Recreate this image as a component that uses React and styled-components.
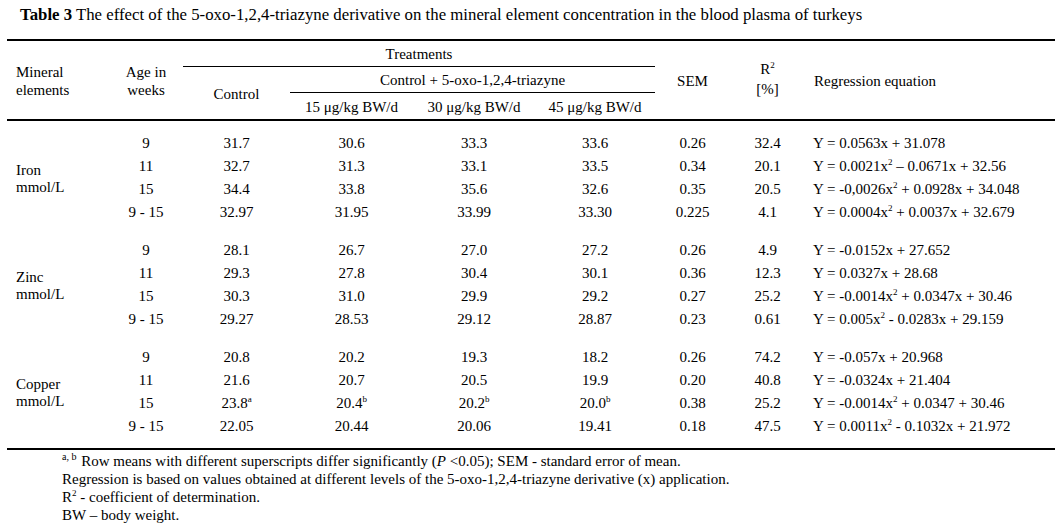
import React from "react";
import styled, { createGlobalStyle } from "styled-components";

const GlobalStyle = createGlobalStyle`
    body {
        margin: 0;
        background: #ffffff;
        color: #000000;
        font-family: "Liberation Serif", "Times New Roman", serif;
        font-size: 15px;
    }
`;

const COLUMNS = "102px 74px 107px 123px 122px 120px 75px 75px 250px";

const groups = [
    {
        name: "Iron",
        rows: [
            ["9", "31.7", "30.6", "33.3", "33.6", "0.26", "32.4", <>Y = 0.0563x + 31.078</>],
            ["11", "32.7", "31.3", "33.1", "33.5", "0.34", "20.1", <>Y = 0.0021x<sup>2</sup> – 0.0671x + 32.56</>],
            ["15", "34.4", "33.8", "35.6", "32.6", "0.35", "20.5", <>Y = -0,0026x<sup>2</sup> + 0.0928x + 34.048</>],
            ["9 - 15", "32.97", "31.95", "33.99", "33.30", "0.225", "4.1", <>Y = 0.0004x<sup>2</sup> + 0.0037x + 32.679</>],
        ],
    },
    {
        name: "Zinc",
        rows: [
            ["9", "28.1", "26.7", "27.0", "27.2", "0.26", "4.9", <>Y = -0.0152x + 27.652</>],
            ["11", "29.3", "27.8", "30.4", "30.1", "0.36", "12.3", <>Y = 0.0327x + 28.68</>],
            ["15", "30.3", "31.0", "29.9", "29.2", "0.27", "25.2", <>Y = -0.0014x<sup>2</sup> + 0.0347x + 30.46</>],
            ["9 - 15", "29.27", "28.53", "29.12", "28.87", "0.23", "0.61", <>Y = 0.005x<sup>2</sup> - 0.0283x + 29.159</>],
        ],
    },
    {
        name: "Copper",
        rows: [
            ["9", "20.8", "20.2", "19.3", "18.2", "0.26", "74.2", <>Y = -0.057x + 20.968</>],
            ["11", "21.6", "20.7", "20.5", "19.9", "0.20", "40.8", <>Y = -0.0324x + 21.404</>],
            ["15", <>23.8<sup>a</sup></>, <>20.4<sup>b</sup></>, <>20.2<sup>b</sup></>, <>20.0<sup>b</sup></>, "0.38", "25.2", <>Y = -0.0014x<sup>2</sup> + 0.0347 + 30.46</>],
            ["9 - 15", "22.05", "20.44", "20.06", "19.41", "0.18", "47.5", <>Y = 0.0011x<sup>2</sup> - 0.1032x + 21.972</>],
        ],
    },
];

function App() {
    return (
        <Page>
            <GlobalStyle />
            <Title>
                <b>Table 3</b> The effect of the 5-oxo-1,2,4-triazyne derivative on the mineral element concentration in the blood plasma of turkeys
            </Title>
            <Table>
                <Header>
                    <HeadCell $col="1" $row="1 / span 3" $align="left">
                        <span>
                            Mineral
                            <br />
                            elements
                        </span>
                    </HeadCell>
                    <HeadCell $col="2" $row="1 / span 3">
                        <span>
                            Age in
                            <br />
                            weeks
                        </span>
                    </HeadCell>
                    <SpanCell $col="3 / span 4" $row="1">
                        <span>Treatments</span>
                    </SpanCell>
                    <HeadCell $col="3" $row="2 / span 2">
                        <span>Control</span>
                    </HeadCell>
                    <SpanCell $col="4 / span 3" $row="2">
                        <span>Control + 5-oxo-1,2,4-triazyne</span>
                    </SpanCell>
                    <HeadCell $col="4" $row="3">
                        <span>15 μg/kg BW/d</span>
                    </HeadCell>
                    <HeadCell $col="5" $row="3">
                        <span>30 μg/kg BW/d</span>
                    </HeadCell>
                    <HeadCell $col="6" $row="3">
                        <span>45 μg/kg BW/d</span>
                    </HeadCell>
                    <HeadCell $col="7" $row="1 / span 3">
                        <span>SEM</span>
                    </HeadCell>
                    <HeadCell $col="8" $row="1 / span 3">
                        <RSquare>
                            R<sup>2</sup>
                            <br />
                            [%]
                        </RSquare>
                    </HeadCell>
                    <HeadCell $col="9" $row="1 / span 3" $align="left">
                        <span>Regression equation</span>
                    </HeadCell>
                </Header>
                <Body>
                    {groups.map((group) => (
                        <Group key={group.name}>
                            <Element>
                                {group.name}
                                <br />
                                mmol/L
                            </Element>
                            {group.rows.map((row, r) =>
                                row.map((value, c) => (
                                    <Cell key={`${r}-${c}`} $col={c + 2} $row={r + 1} $align={c === 7 ? "left" : "center"}>
                                        <span>{value}</span>
                                    </Cell>
                                ))
                            )}
                        </Group>
                    ))}
                </Body>
            </Table>
            <Notes>
                <p>
                    <NoteMark>a, b</NoteMark> Row means with different superscripts differ significantly (<i>P</i> &lt;0.05); SEM - standard error of mean.
                </p>
                <p>Regression is based on values obtained at different levels of the 5-oxo-1,2,4-triazyne derivative (x) application.</p>
                <p>
                    R<sup>2</sup> - coefficient of determination.
                </p>
                <p>BW – body weight.</p>
            </Notes>
        </Page>
    );
}

export default App;

const Page = styled.div`
    width: 1059px;
    height: 526px;
    overflow: hidden;
    font-family: "Liberation Serif", "Times New Roman", serif;

    sup {
        font-size: 9px;
        line-height: 0;
        vertical-align: 6px;
    }
`;

const Title = styled.div`
    padding: 6px 0 0 20px;
    height: 39px;
    box-sizing: border-box;
    line-height: 18px;
    font-size: 16.8px;
`;

const Table = styled.div`
    width: 1048px;
    margin-left: 7px;
`;

const Header = styled.div`
    display: grid;
    grid-template-columns: ${COLUMNS};
    grid-template-rows: 26px 26px 26px;
    border-top: 2px solid #000;
    border-bottom: 2px solid #000;
    line-height: 18px;
`;

const HeadCell = styled.div`
    grid-column: ${(p) => p.$col};
    grid-row: ${(p) => p.$row};
    display: flex;
    align-items: center;
    justify-content: ${(p) => (p.$align === "left" ? "flex-start" : "center")};
    text-align: ${(p) => p.$align || "center"};
    padding-left: ${(p) => (p.$align === "left" ? "9px" : "0")};
    padding-top: 1px;
`;

const SpanCell = styled(HeadCell)`
    border-bottom: 1px solid #000;
`;

const RSquare = styled.span`
    line-height: 20px;
    margin-top: -4px;
`;

const Body = styled.div`
    padding: 3px 0;
    border-bottom: 2px solid #000;
`;

const Group = styled.div`
    display: grid;
    grid-template-columns: ${COLUMNS};
    grid-template-rows: repeat(4, 23px);
    padding: 7.5px 0;
`;

const Element = styled.div`
    grid-column: 1;
    grid-row: 1 / span 4;
    align-self: center;
    padding: 2px 0 0 9px;
    line-height: 17px;
`;

const Cell = styled.div`
    grid-column: ${(p) => p.$col};
    grid-row: ${(p) => p.$row};
    display: flex;
    align-items: center;
    justify-content: ${(p) => (p.$align === "left" ? "flex-start" : "center")};
    padding-left: ${(p) => (p.$align === "left" ? "8px" : "0")};
    white-space: nowrap;
`;

const Notes = styled.div`
    padding: 2px 0 0 62px;
    line-height: 18px;

    p {
        margin: 0;
    }
`;

const NoteMark = styled.sup`
    && {
        font-size: 10px;
        vertical-align: 6px;
        margin-right: 1px;
    }
`;
